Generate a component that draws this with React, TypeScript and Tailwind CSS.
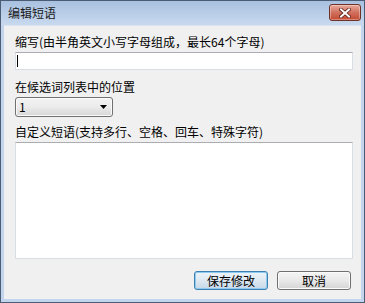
import React from 'react';

const font = { fontFamily: '"Noto Sans CJK SC", "Liberation Sans", sans-serif' };

const CloseButton: React.FC = () => (
  <div className="w-[32px] h-[17px] rounded-[3px] border border-[#6f3026] bg-gradient-to-b from-[#e9a99b] via-[#d0705e] to-[#c4482f] shadow-[inset_0_0_0_1px_rgba(255,255,255,0.35)] flex items-center justify-center">
    <svg width="12" height="10" viewBox="0 0 12 10">
      <path d="M2 1.5 L10 8.5 M10 1.5 L2 8.5" stroke="#5a1e14" strokeWidth="3.6" strokeLinecap="square" />
      <path d="M2 1.5 L10 8.5 M10 1.5 L2 8.5" stroke="#ffffff" strokeWidth="2" strokeLinecap="square" />
    </svg>
  </div>
);

const WinButton: React.FC<{ label: string; primary?: boolean }> = ({ label, primary }) => (
  <div
    className={`w-[74px] h-[19px] rounded-[3px] border flex items-center justify-center text-[12px] leading-none text-black ${
      primary
        ? 'border-[#3c7fb1] bg-gradient-to-b from-[#edf3f8] via-[#dde8f1] to-[#c7d8e7] shadow-[inset_0_0_0_1px_#8fcbf0]'
        : 'border-[#707070] bg-gradient-to-b from-[#f4f4f4] via-[#e9e9e9] to-[#d4d4d4] shadow-[inset_0_0_0_1px_#fbfbfb]'
    }`}
  >
    {label}
  </div>
);

const EditPhraseDialog: React.FC = () => {
  return (
    <div className="w-[365px] h-[303px] border border-[#4b5d74] bg-[#c3d5ec] flex flex-col" style={font}>
      {/* title bar */}
      <div className="h-[24px] flex items-start justify-between bg-gradient-to-b from-[#a9c1e0] to-[#c8d9ee] pl-[7px] pr-[3px]">
        <span className="text-[12px] leading-[24px] text-[#1a1a1a]">编辑短语</span>
        <div className="pt-[3px]">
          <CloseButton />
        </div>
      </div>

      {/* client area */}
      <div className="flex-1 mx-[3px] mb-[3px] bg-[#f0f0f0] border-t border-[#dbe5f2] flex flex-col pl-[11px] pr-[10px] text-[12px] leading-[16px] text-black">
        <div className="mt-[8px]">缩写(由半角英文小写字母组成，最长64个字母)</div>
        <div className="mt-[2px] w-[338px] h-[18px] bg-white border border-[#d9dee6] border-t-[#abadb3] flex items-center pl-[1px]">
          <div className="w-[1px] h-[12px] bg-black" />
        </div>

        <div className="mt-[9px]">在候选词列表中的位置</div>
        <div className="mt-[2px] w-[98px] h-[20px] rounded-[3px] border border-[#707070] bg-gradient-to-b from-[#f3f3f3] via-[#ebebeb] to-[#d6d6d6] shadow-[inset_0_0_0_1px_#fbfbfb] flex items-center justify-between pl-[3px] pr-[5px]">
          <span className="text-[12px] leading-none">1</span>
          <svg width="7" height="4" viewBox="0 0 7 4">
            <path d="M0 0 H7 L3.5 4 Z" fill="#000" />
          </svg>
        </div>

        <div className="mt-[7px]">自定义短语(支持多行、空格、回车、特殊字符)</div>
        <div className="mt-[2px] w-[338px] h-[117px] bg-white border border-[#d9dee6] border-t-[#abadb3]" />

        <div className="mt-[12px] flex justify-end gap-[9px]">
          <WinButton label="保存修改" primary />
          <WinButton label="取消" />
        </div>
      </div>
    </div>
  );
};

export default function App() {
  return <EditPhraseDialog />;
}
